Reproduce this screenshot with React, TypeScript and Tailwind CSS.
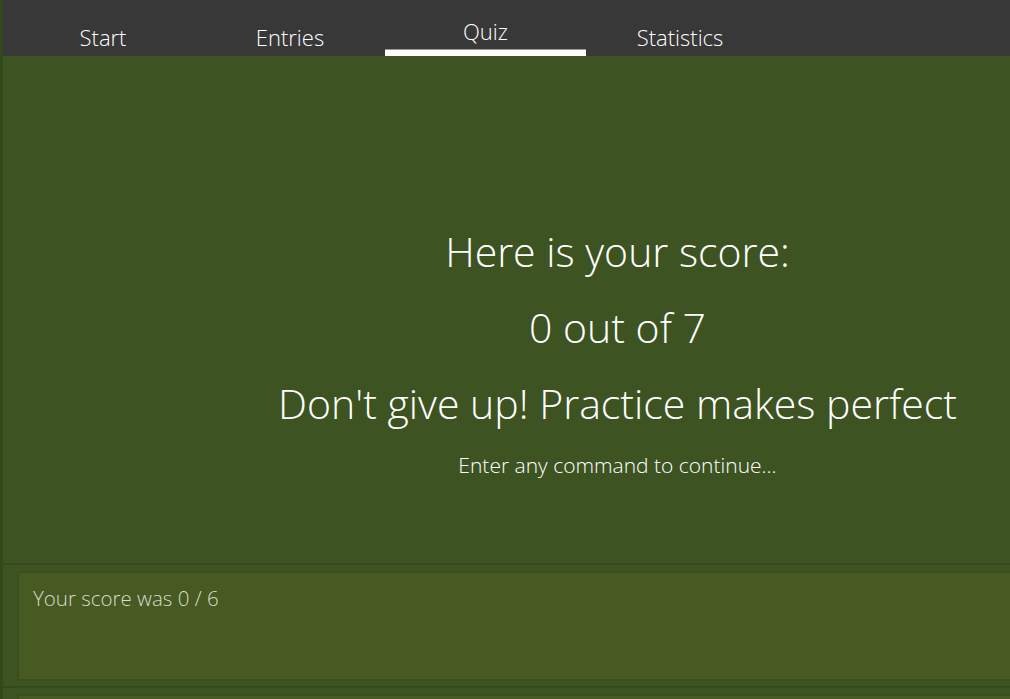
export default function App() {
  const font = { fontFamily: '"Open Sans", "Noto Sans", sans-serif' };
  return (
    <div className="w-[1010px] h-[699px] overflow-hidden bg-[#3d5422]" style={font}>
      <div className="w-[1232px] h-full flex flex-col border-l-[3px] border-[#33481b]">
        {/* Tab bar */}
        <div className="shrink-0 h-[56px] bg-[#383838] flex items-stretch text-white font-light text-[22px]">
          <div className="w-[200px] flex items-end justify-center pb-[2px]">Start</div>
          <div className="w-[174px] flex items-end justify-center pb-[2px]">Entries</div>
          <div className="w-[8px]" />
          <div className="w-[201px] flex flex-col items-center justify-end">
            <span className="pb-[1px]">Quiz</span>
            <div className="w-full h-[7px] bg-white border-t border-[#9a9a9a]" />
          </div>
          <div className="w-[188px] flex items-end justify-center pb-[2px]">Statistics</div>
        </div>

        {/* Result panel */}
        <div className="shrink-0 h-[509px] flex flex-col items-center gap-[16px] pt-[165px] text-white font-light border-b-2 border-[#34491c]">
          <div className="text-[41px] leading-[60px]">Here is your score:</div>
          <div className="text-[41px] leading-[60px]">0 out of 7</div>
          <div className="text-[41px] leading-[60px]">Don't give up! Practice makes perfect</div>
          <div className="text-[21px] leading-[28px] mt-[2px]">Enter any command to continue...</div>
        </div>

        {/* Command output box */}
        <div className="shrink-0 pt-[6px] pl-[14px]">
          <div className="h-[110px] bg-[#465a21] border-2 border-[#3a4f1d] px-[14px] py-[12px] text-[20.5px] leading-[26px] font-light text-[#d6dcc8]">
            Your score was 0 / 6
          </div>
        </div>
        <div className="shrink-0 mt-[5px] border-t-2 border-[#34491c]" />
        <div className="shrink-0 pl-[14px] pt-[6px]">
          <div className="h-[20px] bg-[#465a21] border-2 border-[#3a4f1d]" />
        </div>
      </div>
    </div>
  );
}
